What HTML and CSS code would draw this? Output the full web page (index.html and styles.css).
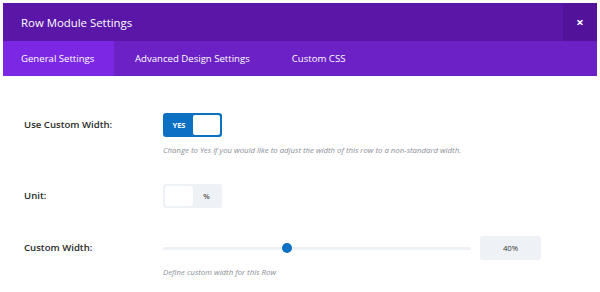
FILE: index.html
```
<!DOCTYPE html>
<html>
<head>
<meta charset="utf-8">
<link rel="stylesheet" href="styles.css">
</head>
<body>
<div class="modal">
  <div class="header">
    <div class="title">Row Module Settings</div>
    <div class="close">&#215;</div>
  </div>
  <div class="tabs">
    <div class="tab active">General Settings</div>
    <div class="tab">Advanced Design Settings</div>
    <div class="tab">Custom CSS</div>
  </div>
  <div class="body">
    <div class="row row-first">
      <div class="label">Use Custom Width:</div>
      <div class="field">
        <div class="toggle on"><span class="yes">YES</span><span class="knob"></span></div>
        <div class="desc">Change to Yes if you would like to adjust the width of this row to a non-standard width.</div>
      </div>
    </div>
    <div class="row row-unit">
      <div class="label">Unit:</div>
      <div class="field">
        <div class="toggle off"><span class="knob"></span><span class="pct">%</span></div>
      </div>
    </div>
    <div class="row row-width">
      <div class="label">Custom Width:</div>
      <div class="field">
        <div class="range-line">
          <div class="track"><span class="thumb"></span></div>
          <div class="value">40%</div>
        </div>
        <div class="desc">Define custom width for this Row</div>
      </div>
    </div>
  </div>
</div>
</body>
</html>
```

FILE: styles.css
```
* { box-sizing: border-box; }
html, body { margin: 0; padding: 0; background: #fff; }
body { font-family: "Open Sans", "Liberation Sans", sans-serif; width: 600px; height: 292px; overflow: hidden; padding: 3px 3px 0 3px; }
.modal { width: 594px; }
.header { height: 38px; background: #5a16a6; display: flex; align-items: center; justify-content: space-between; }
.title { color: #fff; font-size: 11.4px; font-weight: 400; padding-left: 18px; }
.close { width: 34px; height: 38px; background: #52129a; color: #fff; font-size: 13px; font-weight: 700; display: flex; align-items: center; justify-content: center; }
.tabs { height: 35px; background: #6b21c5; display: flex; }
.tab { color: #fff; font-size: 9.6px; font-weight: 400; display: flex; align-items: center; padding: 0 21px; white-space: nowrap; }
.tab.active { background: #7c27e3; padding: 0 0 0 18px; width: 111px; }
.body { padding-left: 21px; }
.row { display: flex; }
.row-first { margin-top: 37px; }
.row-unit { margin-top: 29px; }
.row-width { margin-top: 28px; }
.label { width: 139px; font-size: 9.6px; font-weight: 600; color: #2b2b2b; line-height: 24px; }
.field { flex: 1; }
.toggle { width: 59px; height: 24px; border-radius: 3px; display: flex; align-items: center; padding: 2px; }
.toggle.on { background: #0c71c3; justify-content: space-between; }
.toggle .yes { color: #fff; font-size: 7.5px; font-weight: 700; width: 28px; text-align: center; }
.toggle .knob { width: 27px; height: 20px; background: #fff; border-radius: 2px; }
.toggle.off { background: #eef1f5; }
.toggle.off .knob { width: 28px; }
.toggle .pct { flex: 1; text-align: center; font-size: 7.5px; color: #555; font-weight: 600; }
.desc { font-size: 7.8px; font-style: italic; color: #8a8f99; margin-top: 8px; }
.range-line { display: flex; align-items: center; height: 24px; }
.track { width: 308px; height: 3px; background: #eef1f5; border-radius: 2px; position: relative; }
.thumb { position: absolute; left: 119px; top: -4px; width: 10px; height: 10px; border-radius: 50%; background: #0c71c3; }
.value { margin-left: 9px; width: 61px; height: 24px; background: #eef1f5; border-radius: 3px; font-size: 7.7px; color: #333; display: flex; align-items: center; justify-content: center; }
.row-width .desc { margin-top: 7px; }
```
